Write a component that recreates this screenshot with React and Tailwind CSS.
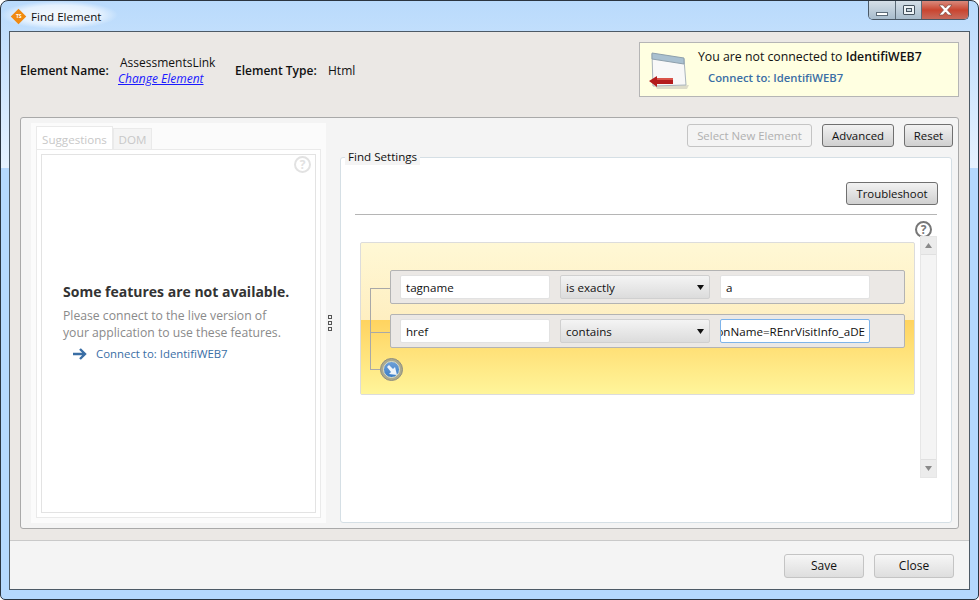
import React from 'react';

const font = { fontFamily: '"Open Sans", "Noto Sans", sans-serif' };

const HelpIcon = ({ className }) => (
  <div className={`w-[17px] h-[17px] rounded-full border-2 flex items-center justify-center text-[12px] font-bold leading-none ${className}`}>?</div>
);

const Button = ({ children, className = '' }) => (
  <button className={`h-[23px] rounded-[3px] border border-[#707070] bg-gradient-to-b from-[#f2f2f2] to-[#d0d0d0] text-[11.4px] leading-none text-[#111] ${className}`}>{children}</button>
);

const FooterButton = ({ children }) => (
  <button className="w-[80px] h-[24px] rounded-[3px] border border-[#c4c4c4] bg-gradient-to-b from-[#f6f6f6] to-[#dedede] text-[12px] leading-none text-[#111]">{children}</button>
);

const TextBox = ({ value, focused }) => (
  <div className={`w-[150px] h-[24px] pt-[2px] rounded-[2px] bg-white border overflow-hidden flex items-center whitespace-nowrap text-[11.6px] text-[#111] ${focused ? 'border-[#7eb4ea] justify-end pr-[4px]' : 'border-[#e2e2e2] pl-[5px]'}`}>{value}</div>
);

const SelectBox = ({ value }) => (
  <div className="w-[150px] h-[24px] rounded-[2px] border border-[#d0d0d0] bg-gradient-to-b from-[#f4f4f4] to-[#dcdcdc] flex items-center justify-between pl-[5px] pr-[5px] text-[11.6px] text-[#111]">
    <span className="pt-[2px]">{value}</span>
    <svg width="7" height="5" viewBox="0 0 7 5"><path d="M0 0h7L3.5 5z" fill="#111" /></svg>
  </div>
);

const FilterRow = ({ field, op, value, focused }) => (
  <div className="ml-[29px] mr-[9px] h-[34px] rounded-[2px] border border-[#b3b3b3] bg-[#ebe8e5] flex items-center gap-[10px] pl-[9px]">
    <TextBox value={field} />
    <SelectBox value={op} />
    <TextBox value={value} focused={focused} />
  </div>
);

const WindowIcon = () => (
  <svg width="44" height="44" viewBox="0 0 44 44">
    <path d="M6 38 L40 37 L38 41 L8 41z" fill="#cfcdbf" opacity=".7" />
    <path d="M3 6 L35 11 L37 37 L4 38z" fill="#f8f8f8" stroke="#a9b4bc" />
    <path d="M3 5 L35 10 L35 16 L3 11z" fill="#a9c0d0" stroke="#8ea0ac" />
    <path d="M8 28 L0 33 L8 39 L8 36 L24 36 L24 30 L8 30z" fill="#b41c1c" />
    <path d="M8 30 L24 30 L24 32 L8 32z" fill="#d9534a" />
  </svg>
);

const AddIcon = () => (
  <div className="absolute left-[19px] top-[115px] w-[23px] h-[23px] rounded-full bg-[#aaa98f] border border-[#8f8f80] flex items-center justify-center">
    <div className="w-[17px] h-[17px] rounded-full border border-[#d9dcc8] bg-gradient-to-b from-[#6d9fd8] to-[#3b7fc8] flex items-center justify-center">
      <svg width="12" height="12" viewBox="0 0 12 12"><path d="M1 3l2-2 4 4 2-2 2 8-8-1 2-2z" fill="#eef4fa" /></svg>
    </div>
  </div>
);

const ArrowIcon = () => (
  <svg width="14" height="12" viewBox="0 0 14 12" fill="none" stroke="#3a6ea5" strokeWidth="2.4"><path d="M0 6h12M7 1l5 5-5 5" /></svg>
);

const App = () => {
  return (
    <div style={font} className="relative w-[979px] h-[600px] overflow-hidden rounded-t-[8px] rounded-b-[5px] border border-[#2a3440] bg-[linear-gradient(to_bottom,#b9dafc_0%,#e6f2ff_28%,#b5d8fd_28%,#b5d8fd_100%)] flex flex-col">
      {/* title bar */}
      <div className="h-[30px] shrink-0 flex items-start justify-between">
        <div className="flex items-center gap-[5px] pl-[9px] pr-[16px] pt-[6px] pb-[4px] text-[11.6px] text-[#111] bg-[radial-gradient(ellipse_closest-side,rgba(255,255,255,.85),rgba(255,255,255,.6)_70%,rgba(255,255,255,0))]">
          <div className="w-[16px] h-[16px] flex items-center justify-center">
            <div className="w-[11px] h-[11px] rotate-45 bg-[#f08a12] flex items-center justify-center">
              <span className="-rotate-45 text-[5px] font-bold leading-none text-white">TS</span>
            </div>
          </div>
          <span className="pt-[1px]">Find Element</span>
        </div>
        <div className="mr-[9px] flex h-[19px] rounded-b-[5px] border border-t-0 border-[#4a5866] overflow-hidden">
          <div className="w-[27px] bg-gradient-to-b from-[#d5dfe8] to-[#a8bccd] border-r border-[#5c6b78] flex items-end justify-center pb-[3px]">
            <div className="w-[12px] h-[4px] bg-white border border-[#5c6b78]" />
          </div>
          <div className="w-[26px] bg-gradient-to-b from-[#d5dfe8] to-[#a8bccd] border-r border-[#5c6b78] flex items-center justify-center">
            <div className="w-[12px] h-[10px] rounded-[1px] border border-[#45525e] bg-[#eef3f7] flex items-center justify-center">
              <div className="w-[6px] h-[4px] border border-[#45525e] bg-[#c9d6e0]" />
            </div>
          </div>
          <div className="w-[46px] bg-gradient-to-b from-[#d8897c] via-[#c9442f] to-[#c66a5c] flex items-center justify-center">
            <svg width="15" height="12" viewBox="0 0 15 12"><path d="M1 1h4l2.500 3L10 1h4l-4.500 5L14 11h-4L7.500 8 5 11H1l4.500-5z" fill="#fff" stroke="#7a4a44" strokeWidth=".7" /></svg>
          </div>
        </div>
      </div>

      {/* client area */}
      <div className="mx-[8px] h-[559px] shrink-0 border border-[#4d5a66] flex flex-col bg-[#ebe8e5]">
        <div className="h-[85px] shrink-0 flex items-start justify-between pl-[10px] pr-[10px]">
          <div className="flex items-center mt-[23px] text-[12px] text-[#111]">
            <span className="font-semibold w-[98px]">Element Name:</span>
            <div className="w-[117px] flex flex-col">
              <span className="pl-[2px] leading-[16px]">AssessmentsLink</span>
              <span className="italic text-[#1a1aff] underline leading-[16px]">Change Element</span>
            </div>
            <span className="font-semibold w-[93px]">Element Type:</span>
            <span>Html</span>
          </div>
          <div className="mt-[10px] w-[320px] h-[55px] border border-[#b5b5b5] bg-[#ffffe1] flex items-center pl-[9px]">
            <WindowIcon />
            <div className="pl-[5px] pb-[4px] text-[12.3px]">
              <div className="text-[#111]">You are not connected to <span className="font-semibold">IdentifiWEB7</span></div>
              <div className="pl-[10px] mt-[3px] font-semibold text-[#3a6ea5] text-[11.3px]">Connect to: IdentifiWEB7</div>
            </div>
          </div>
        </div>

        <div className="mx-[10px] h-[412px] shrink-0 rounded-[3px] border border-[#a9a9a9] bg-[#f4f4f4] flex">
          {/* left panel */}
          <div className="ml-[10px] mt-[5px] mb-[5px] w-[295px] bg-[#fbfbfb] flex flex-col pl-[5px] pr-[5px] pt-[3px] pb-[5px]">
            <div className="flex items-end h-[24px] shrink-0 text-[11.6px] text-[#c8c8c8]">
              <div className="h-[24px] w-[77px] pt-[3px] border border-b-0 border-[#eaeaea] bg-white flex items-center justify-center">Suggestions</div>
              <div className="h-[22px] w-[39px] pt-[2px] border border-[#eaeaea] bg-[#f4f4f4] flex items-center justify-center">DOM</div>
            </div>
            <div className="flex-1 border border-[#eaeaea] bg-white p-[4px] -mt-px">
              <div className="relative h-full border border-[#e3e3e3] bg-white flex flex-col pl-[21px] pt-[127px]">
                <HelpIcon className="absolute right-[4px] top-[1px] border-[#e2e2e2] text-[#e2e2e2]" />
                <div className="text-[14px] font-bold text-[#333] leading-[19px]">Some features are not available.</div>
                <div className="mt-[6px] text-[12.2px] leading-[17px] text-[#8a8a8a]">Please connect to the live version of<br />your application to use these features.</div>
                <div className="mt-[4px] ml-[10px] flex items-center gap-[9px] text-[11.4px] text-[#3a6ea5]"><ArrowIcon />Connect to: IdentifiWEB7</div>
              </div>
            </div>
          </div>

          {/* splitter */}
          <div className="w-[14px] shrink-0 flex flex-col items-center justify-center gap-[2px] pr-[6px]">
            <div className="w-[4px] h-[4px] border border-[#555]" />
            <div className="w-[4px] h-[4px] border border-[#555]" />
            <div className="w-[4px] h-[4px] border border-[#555]" />
          </div>

          {/* right panel */}
          <div className="flex-1 flex flex-col pr-[6px]">
            <div className="h-[39px] shrink-0 -mr-px flex items-start justify-end gap-[10px] pt-[6px]">
              <button className="w-[125px] h-[23px] rounded-[3px] border border-[#c4c4c4] bg-[#f4f4f4] text-[11.4px] leading-none text-[#b0b0b0]">Select New Element</button>
              <Button className="w-[72px]">Advanced</Button>
              <Button className="w-[49px]">Reset</Button>
            </div>
            <div className="relative h-[366px] rounded-[3px] border border-[#d5dfe5] bg-white flex flex-col">
              <span className="absolute left-[4px] -top-[9px] bg-[#f4f4f4] px-[3px] text-[11.6px] leading-[16px] text-[#111]">Find Settings</span>
              <div className="h-[47px] shrink-0 flex items-end justify-end pr-[13px]">
                <Button className="w-[92px]">Troubleshoot</Button>
              </div>
              <div className="mt-[9px] mx-[14px] h-px shrink-0 bg-[#b5b5b5]" />
              <div className="h-[20px] shrink-0 flex justify-end pr-[19px] pt-[6px]">
                <HelpIcon className="border-[#777] text-[#777]" />
              </div>
              <div className="flex-1 flex items-start pl-[19px] pr-[14px] pt-[1px] gap-[5px]">
                <div className="relative mt-[6px] w-[555px] h-[153px] rounded-[2px] border border-[#dcdcdc] bg-gradient-to-b from-[#fff8d5] to-[#fde5ad] flex flex-col gap-[10px] pt-[27px]">
                  <div className="absolute inset-x-0 top-[77px] bottom-0 bg-gradient-to-b from-[#ffd35f] to-[#fff59a]" />
                  <div className="absolute left-[9px] top-[45px] w-px h-[81px] bg-[#a8a8a8]" />
                  <div className="absolute left-[9px] top-[45px] w-[20px] h-px bg-[#a8a8a8]" />
                  <div className="absolute left-[9px] top-[89px] w-[20px] h-px bg-[#a8a8a8]" />
                  <div className="absolute left-[9px] top-[126px] w-[12px] h-px bg-[#a8a8a8]" />
                  <div className="relative flex flex-col gap-[10px]">
                    <FilterRow field="tagname" op="is exactly" value="a" />
                    <FilterRow field="href" op="contains" value="onName=REnrVisitInfo_aDE" focused />
                  </div>
                  <AddIcon />
                </div>
                <div className="w-[17px] h-[242px] bg-[#f0f0f0] border border-[#e6e6e6] flex flex-col">
                  <div className="h-[17px] bg-[#ececec] flex items-center justify-center">
                    <svg width="7" height="5" viewBox="0 0 7 5"><path d="M3.500 0L7 5H0z" fill="#8a8a8a" /></svg>
                  </div>
                  <div className="flex-1 bg-[#f4f4f4] border-y border-[#e0e0e0]" />
                  <div className="h-[17px] bg-[#ececec] flex items-center justify-center">
                    <svg width="7" height="5" viewBox="0 0 7 5"><path d="M0 0h7L3.500 5z" fill="#8a8a8a" /></svg>
                  </div>
                </div>
              </div>
            </div>
          </div>
        </div>

        <div className="mt-[11px] flex-1 border-t border-[#c9c9c9] bg-[#f4f4f4] flex items-start justify-end gap-[10px] pt-[13px] pr-[15px]">
          <FooterButton>Save</FooterButton>
          <FooterButton>Close</FooterButton>
        </div>
      </div>
    </div>
  );
};

export default App;
